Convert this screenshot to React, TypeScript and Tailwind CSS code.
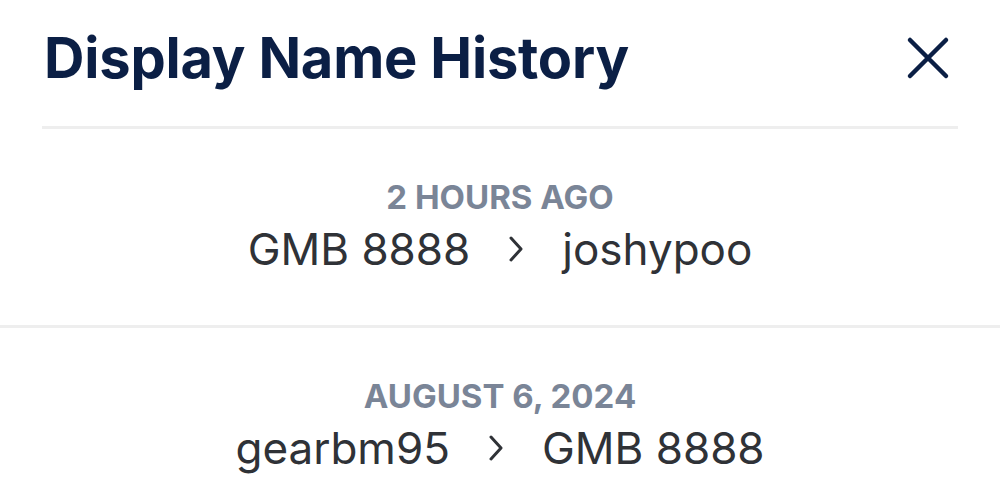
import React from "react";

const rows = [
  { when: "2 HOURS AGO", from: "GMB 8888", to: "joshypoo" },
  { when: "AUGUST 6, 2024", from: "gearbm95", to: "GMB 8888" },
];

function Chevron() {
  return (
    <svg width="16" height="26" viewBox="0 0 16 26" fill="none" className="mx-[38px] shrink-0">
      <path d="M3 2 L13 13 L3 24" stroke="#2f3237" strokeWidth="3" strokeLinecap="round" strokeLinejoin="round" />
    </svg>
  );
}

export default function App() {
  return (
    <div className="w-[1000px] h-[493px] overflow-hidden bg-white" style={{ fontFamily: "Inter, 'Noto Sans', sans-serif" }}>
      <div className="flex items-center justify-between h-[126px] pl-[44px] pr-[50px] pb-[10px]">
        <h1 className="text-[56px] font-bold text-[#0b1f45] tracking-[-0.2px] leading-none">Display Name History</h1>
        <svg width="44" height="44" viewBox="0 0 44 44" fill="none">
          <path d="M4 4 L40 40 M40 4 L4 40" stroke="#0b1f45" strokeWidth="4.5" strokeLinecap="round" />
        </svg>
      </div>
      <div className="mx-[42px] h-[3px] bg-[#eeeeee]" />
      {rows.map((r, i) => (
        <div key={i} className={i > 0 ? "border-t-[3px] border-[#eeeeee]" : ""}>
          <div className="h-[196px] flex flex-col items-center justify-center pb-[2px]">
            <div className="text-[33px] font-bold text-[#7a8597] leading-none">{r.when}</div>
            <div className="flex items-center mt-[13px] text-[44px] text-[#2f3237] leading-none">
              <span>{r.from}</span>
              <Chevron />
              <span>{r.to}</span>
            </div>
          </div>
        </div>
      ))}
    </div>
  );
}
